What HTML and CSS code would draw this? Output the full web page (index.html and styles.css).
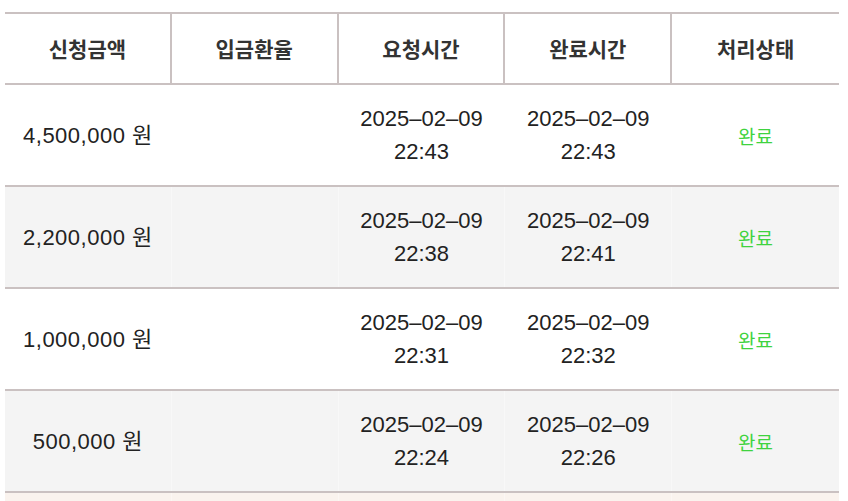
FILE: index.html
```html
<!DOCTYPE html>
<html lang="ko">
<head>
<meta charset="utf-8">
<link rel="stylesheet" href="styles.css">
</head>
<body>
<div class="wrap">
  <div class="table">
    <div class="row head">
      <div class="cell">신청금액</div>
      <div class="cell">입금환율</div>
      <div class="cell">요청시간</div>
      <div class="cell">완료시간</div>
      <div class="cell">처리상태</div>
    </div>
    <div class="row">
      <div class="cell amount">4,500,000 원</div>
      <div class="cell"></div>
      <div class="cell"><span>2025–02–09</span><span>22:43</span></div>
      <div class="cell"><span>2025–02–09</span><span>22:43</span></div>
      <div class="cell status">완료</div>
    </div>
    <div class="row alt">
      <div class="cell amount">2,200,000 원</div>
      <div class="cell"></div>
      <div class="cell"><span>2025–02–09</span><span>22:38</span></div>
      <div class="cell"><span>2025–02–09</span><span>22:41</span></div>
      <div class="cell status">완료</div>
    </div>
    <div class="row">
      <div class="cell amount">1,000,000 원</div>
      <div class="cell"></div>
      <div class="cell"><span>2025–02–09</span><span>22:31</span></div>
      <div class="cell"><span>2025–02–09</span><span>22:32</span></div>
      <div class="cell status">완료</div>
    </div>
    <div class="row alt">
      <div class="cell amount">500,000 원</div>
      <div class="cell"></div>
      <div class="cell"><span>2025–02–09</span><span>22:24</span></div>
      <div class="cell"><span>2025–02–09</span><span>22:26</span></div>
      <div class="cell status">완료</div>
    </div>
    <div class="row pending">
      <div class="cell"></div>
      <div class="cell"></div>
      <div class="cell"></div>
      <div class="cell"></div>
      <div class="cell"></div>
    </div>
  </div>
</div>
</body>
</html>
```

FILE: styles.css
```css
html, body {
  margin: 0;
  padding: 0;
  background: #ffffff;
}
body {
  font-family: "Liberation Sans", "Noto Sans CJK KR", sans-serif;
  color: #222222;
  overflow: hidden;
}
.wrap {
  padding: 12px 9px 0 5px;
}
.table {
  border-top: 2px solid #cac1c1;
}
.row {
  display: grid;
  grid-template-columns: repeat(5, 1fr);
  border-bottom: 2px solid #cac1c1;
  height: 100px;
}
.row.head {
  height: 69px;
}
.row.alt {
  background: #f4f4f4;
}
.row.pending {
  background: #faf3ee;
}
.cell {
  display: flex;
  flex-direction: column;
  align-items: center;
  justify-content: center;
  font-size: 22px;
  line-height: 33px;
  text-align: center;
  border-right: 1px solid rgba(255,255,255,0.35);
}
.cell:last-child {
  border-right: none;
}
.amount {
  letter-spacing: 0.5px;
}
.head .cell {
  font-family: "Noto Sans CJK KR", sans-serif;
  font-weight: 700;
  font-size: 21px;
  color: #333333;
  border-right: 2px solid #cac1c1;
}
.head .cell:last-child {
  border-right: none;
}
.status {
  font-family: "Noto Sans CJK KR", sans-serif;
  font-size: 19px;
  color: #3fd33f;
}
```
